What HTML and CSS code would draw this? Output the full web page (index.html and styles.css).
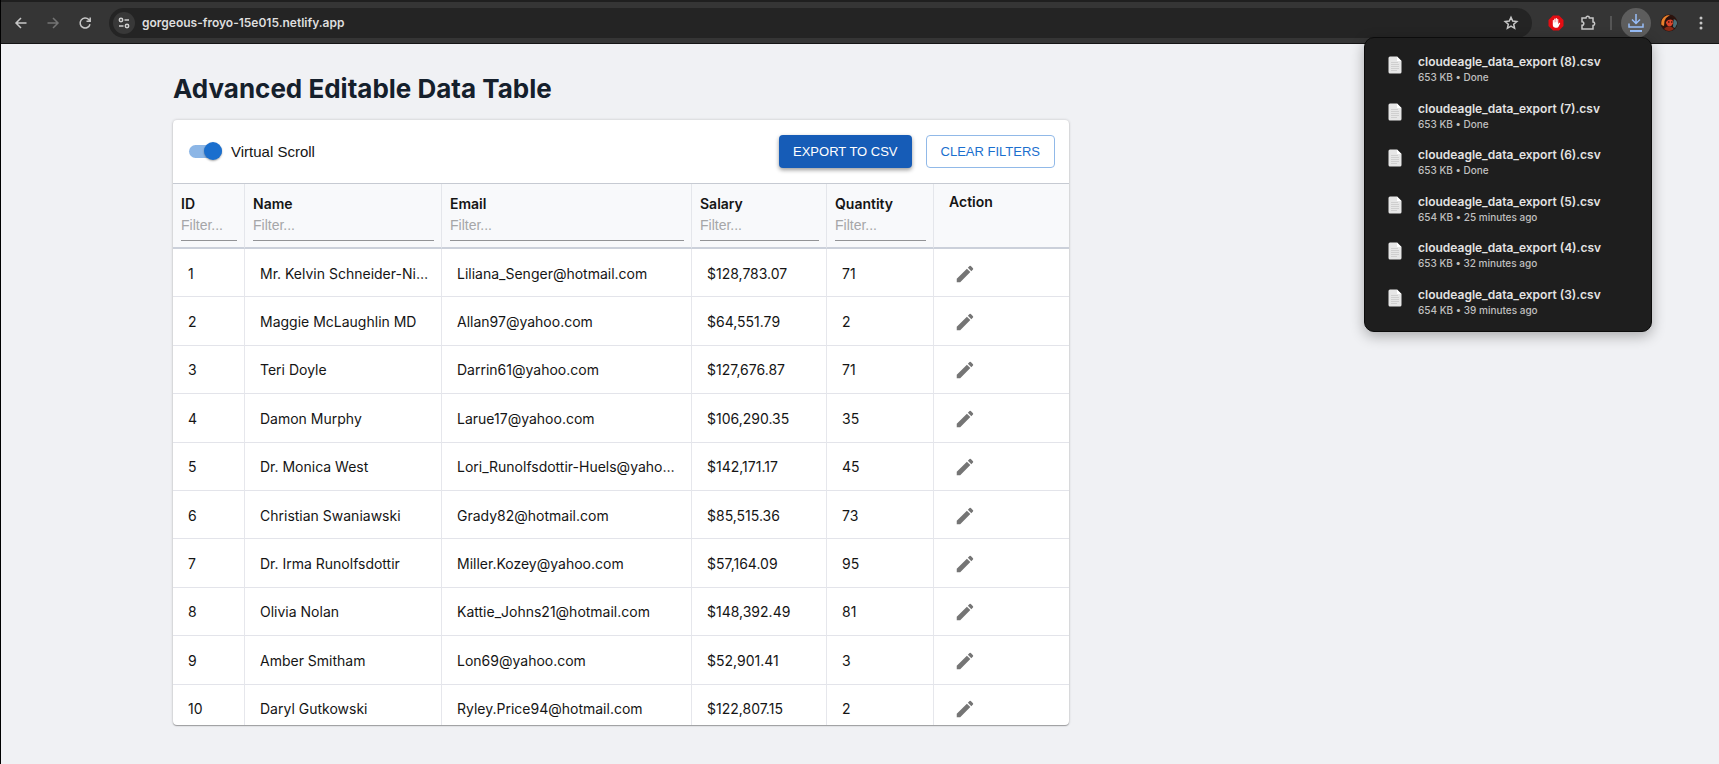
FILE: index.html
```html
<!DOCTYPE html>
<html lang="en">
<head>
<meta charset="utf-8">
<title>Advanced Editable Data Table</title>
<link rel="stylesheet" href="styles.css">
</head>
<body>
<svg class="sprite" aria-hidden="true">
  <symbol id="pencil" viewBox="0 0 24 24"><path d="M3 17.25V21h3.75L17.81 9.94l-3.75-3.75L3 17.25zM20.71 7.04c.39-.39.39-1.02 0-1.41l-2.34-2.34a.996.996 0 0 0-1.41 0l-1.83 1.83 3.75 3.75 1.83-1.83z"/></symbol>
  <symbol id="doc" viewBox="0 0 14 18"><path d="M2 .5h7L13.5 5v11a1.500 1.500 0 0 1-1.500 1.500H2A1.500 1.500 0 0 1 .5 16V2A1.500 1.500 0 0 1 2 .5z" fill="#e6e6e6"/><path d="M9 .5 13.500 5H9z" fill="#fff"/><path d="M3 6.500h7M3 8.500h8M3 10.500h8M3 12.500h8M3 14.500h6" stroke="#c4c4c4" stroke-width=".7"/></symbol>
</svg>
<header class="browser">
  <nav class="nav" aria-label="History">
    <button class="tool" aria-label="Back"><svg width="16" height="16" viewBox="0 0 16 16"><path d="M13.500 8H3M8 3 3 8l5 5"/></svg></button>
    <button class="tool dim" aria-label="Forward"><svg width="16" height="16" viewBox="0 0 16 16"><path d="M2.500 8H13M8 3l5 5-5 5"/></svg></button>
    <button class="tool" aria-label="Reload"><svg width="16" height="16" viewBox="0 0 16 16"><path d="M13 9.200A5 5 0 1 1 11.800 4.600L13 5.800M13.200 2.500V6.200H9.500"/></svg></button>
  </nav>
  <div class="omnibox">
    <button class="site" aria-label="Site information"><svg width="14" height="14" viewBox="0 0 14 14"><circle cx="4" cy="4" r="1.700"/><path d="M7.500 4H12M2 10h4.500"/><circle cx="10" cy="10" r="1.700"/></svg></button>
    <input class="url" aria-label="Address" value="gorgeous-froyo-15e015.netlify.app">
    <button class="tool star" aria-label="Bookmark"><svg width="16" height="16" viewBox="0 0 16 16"><path d="m8 2.300 1.700 3.800 4.100.4-3.100 2.700.9 4.100L8 11.200l-3.600 2.100.9-4.100L2.200 6.500l4.100-.4z"/></svg></button>
  </div>
  <div class="extensions">
    <button class="tool" aria-label="Ad blocker"><svg width="16" height="16" viewBox="0 0 16 16" class="solid"><path d="M5 .5h6L15.500 5v6L11 15.500H5L.5 11V5z" fill="#e40d13"/><path d="M4.800 8.500V5.300q.6-.7 1.100 0V7.500h.3V3.900q.6-.7 1.200 0v3.300h.3V3.300q.6-.7 1.200 0v3.900h.3V4.200q.6-.7 1.100 0v5.100l.9-1.500q.8-.3 1 .4l-1.700 3.600q-.5 1-1.600 1H7.300q-2.500-.4-2.500-2.600z" fill="#fff"/></svg></button>
    <button class="tool" aria-label="Extensions"><svg width="18" height="18" viewBox="0 0 18 18"><path d="M3 4h4a1.700 1.700 0 0 1 3.400 0H14v4a1.700 1.700 0 0 1 0 3.400V15H3v-3.700a1.800 1.800 0 0 0 0-3.600z"/></svg></button>
    <span class="rule"></span>
    <button class="tool downloads" aria-label="Downloads"><svg width="18" height="20" viewBox="0 0 18 20"><path d="M9 1v9M5 6.500l4 4 4-4M2 10.500v3.500h14v-3.500"/><path d="M3 18h12" stroke-width="2"/></svg></button>
    <button class="tool" aria-label="Profile"><svg width="18" height="18" viewBox="0 0 18 18" class="solid"><circle cx="9" cy="9" r="8.500" fill="#2c130e"/><path d="M1.500 11Q.5 6 4 3q2-2 6-2L6 4 4.500 7 4 12z" fill="#e9812c"/><path d="M13.500 5q4 1 3.500 5l-2 4-2-1z" fill="#4c7078"/><path d="M6 5.500q3.500-3 7 0v4q-1.500 3-3.500 3T6 9z" fill="#dc452b"/><path d="M6 5q3-4 7.500 0v2l-2.500-1.500L8 6 6 8z" fill="#2a100c"/><path d="M8 8h1.500M11 8h1.500" stroke="#4a140c"/><path d="M4 15q2-3 5-2.500 3-.5 5 2.500-5 4-10 0z" fill="#8b2a14"/></svg></button>
    <button class="tool" aria-label="Menu"><svg width="16" height="16" viewBox="0 0 16 16" class="solid"><circle cx="8" cy="3" r="1.500" fill="#c7c7c7"/><circle cx="8" cy="8" r="1.500" fill="#c7c7c7"/><circle cx="8" cy="13" r="1.500" fill="#c7c7c7"/></svg></button>
  </div>
  <ul class="popup" id="popup"></ul>
</header>
<main class="page">
  <h1>Advanced Editable Data Table</h1>
  <section class="card">
    <div class="toolbar">
      <label class="switch"><input type="checkbox" role="switch" checked><span>Virtual Scroll</span></label>
      <div class="actions">
        <button class="btn primary">EXPORT TO CSV</button>
        <button class="btn outline">CLEAR FILTERS</button>
      </div>
    </div>
    <div class="scroller">
      <table>
        <colgroup><col class="w-id"><col class="w-name"><col class="w-email"><col class="w-salary"><col class="w-qty"><col class="w-action"></colgroup>
        <thead><tr>
          <th><label for="f1">ID</label><input id="f1" placeholder="Filter..."></th>
          <th><label for="f2">Name</label><input id="f2" placeholder="Filter..."></th>
          <th><label for="f3">Email</label><input id="f3" placeholder="Filter..."></th>
          <th><label for="f4">Salary</label><input id="f4" placeholder="Filter..."></th>
          <th><label for="f5">Quantity</label><input id="f5" placeholder="Filter..."></th>
          <th class="action">Action</th>
        </tr></thead>
        <tbody id="rows"></tbody>
      </table>
    </div>
  </section>
</main>
<script src="app.js"></script>
</body>
</html>
```
FILE: styles.css
```css
* { box-sizing: border-box; }
body {
  margin: 0;
  min-height: 100vh;
  border-left: 1px solid #000;
  background: #f0f1f4;
  color: #151515;
  font: 14px/20px Inter, "Liberation Sans", sans-serif;
}
button, input { font: inherit; color: inherit; }
button { padding: 0; border: 0; background: none; }
.sprite { position: absolute; width: 0; height: 0; }

.browser {
  position: relative;
  display: flex;
  align-items: center;
  gap: 12px;
  height: 44px;
  padding: 0 6px 0 8px;
  background: #353535;
  border-top: 2px solid #1f1f1f;
  border-bottom: 1px solid #151515;
}
.nav { display: flex; gap: 8px; }
.tool {
  display: grid;
  place-items: center;
  width: 24px;
  height: 24px;
  color: #c7c7c7;
}
.tool svg, .site svg { fill: none; stroke: currentColor; stroke-width: 1.5; }
.tool svg.solid { stroke: none; }
.nav .dim { color: #747474; }
.omnibox {
  flex: 1;
  display: flex;
  align-items: center;
  gap: 7px;
  height: 30px;
  padding: 0 9px 0 4px;
  border-radius: 15px;
  background: #242424;
}
.site {
  display: grid;
  place-items: center;
  width: 22px;
  height: 22px;
  border-radius: 50%;
  background: #383838;
  color: #d0d0d0;
}
.url {
  flex: 1;
  padding: 0;
  border: 0;
  outline: 0;
  background: none;
  color: #dedede;
  font-size: 12px;
  font-weight: 600;
}
.extensions { display: flex; align-items: center; gap: 8px; }
.rule { width: 2px; height: 14px; margin: 0 1px 0 2px; background: #555; }
.extensions .downloads {
  width: 30px;
  height: 30px;
  margin-right: -2px;
  border-radius: 50%;
  background: #5d5d5d;
  color: #98bdf8;
}
.popup {
  position: absolute;
  top: 35px;
  right: 67px;
  z-index: 2;
  display: flex;
  flex-direction: column;
  justify-content: space-between;
  width: 288px;
  height: 295px;
  margin: 0;
  padding: 8px 0 6px;
  list-style: none;
  border: 1px solid #0c0c0c;
  border-radius: 10px;
  background: #1e1e1e;
  box-shadow: 0 4px 14px rgba(0, 0, 0, .3);
}
.popup li {
  display: flex;
  gap: 16px;
  align-items: flex-start;
  padding: 8px 23px 7px;
}
.popup svg { width: 14px; height: 18px; margin-top: 2px; }
.popup strong, .popup small { display: block; }
.popup strong { color: #e3e3e3; font-size: 12px; line-height: 16px; font-weight: 600; }
.popup small { color: #c0c0c0; font-size: 10px; line-height: 15px; font-weight: 500; }

.page { max-width: 1374px; margin: 0 auto; }
h1 {
  margin: 0;
  padding: 29px 0 15px;
  color: #15202c;
  font-size: 26px;
  line-height: 32px;
  font-weight: 700;
}
.card {
  max-width: 896px;
  overflow: hidden;
  border-radius: 4px;
  background: #fff;
  box-shadow: 0 1px 1px rgba(0, 0, 0, .3), 0 0 3px rgba(0, 0, 0, .2);
}
.toolbar {
  display: flex;
  align-items: center;
  justify-content: space-between;
  height: 63px;
  padding: 0 14px 0 16px;
}
.switch {
  display: flex;
  align-items: center;
  gap: 9px;
  font: 15px/20px "Liberation Sans", sans-serif;
}
.switch input {
  position: relative;
  appearance: none;
  width: 33px;
  height: 13px;
  margin: 0;
  border-radius: 7px;
  background: #8cb6e6;
}
.switch input::after {
  content: "";
  position: absolute;
  top: -3px;
  right: 0;
  width: 18px;
  height: 18px;
  border-radius: 50%;
  background: #1b6fce;
  box-shadow: 0 1px 2px rgba(0, 0, 0, .35);
}
.actions { display: flex; gap: 14px; }
.btn {
  height: 33px;
  padding: 0 14px;
  border-radius: 4px;
  font: 13px/20px "Liberation Sans", sans-serif;
}
.btn.primary {
  background: #165cb7;
  color: #fff;
  box-shadow: 0 2px 4px rgba(0, 0, 0, .4);
}
.btn.outline { border: 1px solid #91b9e8; color: #1b6fce; }

.scroller { height: 542px; overflow: auto; scrollbar-width: none; border-top: 1px solid #c6cad2; }
table {
  width: 100%;
  height: 549px;
  table-layout: fixed;
  border-spacing: 0;
}
.w-id { width: 72px; }
.w-name { width: 197px; }
.w-email { width: 250px; }
.w-salary { width: 135px; }
.w-qty { width: 107px; }
th {
  height: 65px;
  padding: 10px 7px 6px 8px;
  border-right: 1px solid #e4e6eb;
  border-bottom: 2px solid #cbd0da;
  background: #f8f9fb;
  text-align: left;
  vertical-align: top;
  font-weight: 600;
}
th label { display: block; }
th.action { padding: 8px 15px; }
th:last-child, td:last-child { border-right: 0; }
th input {
  display: block;
  width: 100%;
  height: 27px;
  padding: 0 0 5px;
  border: 0;
  border-bottom: 1px solid #929396;
  background: none;
  font: 14px/20px "Liberation Sans", sans-serif;
}
th input::placeholder { color: #a5a6a8; opacity: 1; }
td {
  height: 48px;
  padding: 2px 12px 0 15px;
  border-right: 1px solid #e6e7ec;
  border-bottom: 1px solid #e3e4ea;
  overflow: hidden;
  text-overflow: ellipsis;
  white-space: nowrap;
}
.edit { display: grid; place-items: center; width: 32px; height: 32px; color: #757575; }
.edit svg { width: 22px; height: 22px; fill: currentColor; }
```
FILE: app.js
```js
const people = [
  ["Mr. Kelvin Schneider-Nitzsche", "Liliana_Senger@hotmail.com", "$128,783.07", 71],
  ["Maggie McLaughlin MD", "Allan97@yahoo.com", "$64,551.79", 2],
  ["Teri Doyle", "Darrin61@yahoo.com", "$127,676.87", 71],
  ["Damon Murphy", "Larue17@yahoo.com", "$106,290.35", 35],
  ["Dr. Monica West", "Lori_Runolfsdottir-Huels@yahoo.com", "$142,171.17", 45],
  ["Christian Swaniawski", "Grady82@hotmail.com", "$85,515.36", 73],
  ["Dr. Irma Runolfsdottir", "Miller.Kozey@yahoo.com", "$57,164.09", 95],
  ["Olivia Nolan", "Kattie_Johns21@hotmail.com", "$148,392.49", 81],
  ["Amber Smitham", "Lon69@yahoo.com", "$52,901.41", 3],
  ["Daryl Gutkowski", "Ryley.Price94@hotmail.com", "$122,807.15", 2]
];
document.getElementById("rows").innerHTML = people.map((p, i) =>
  `<tr><td>${i + 1}</td>${p.map(v => `<td>${v}</td>`).join("")}<td><button class="edit" aria-label="Edit ${p[0]}"><svg><use href="#pencil"/></svg></button></td></tr>`
).join("");

const downloads = [
  [8, "653 KB • Done"], [7, "653 KB • Done"], [6, "653 KB • Done"],
  [5, "654 KB • 25 minutes ago"], [4, "653 KB • 32 minutes ago"], [3, "654 KB • 39 minutes ago"]
];
document.getElementById("popup").innerHTML = downloads.map(([n, info]) =>
  `<li><svg><use href="#doc"/></svg><div><strong>cloudeagle_data_export (${n}).csv</strong><small>${info}</small></div></li>`
).join("");
```
